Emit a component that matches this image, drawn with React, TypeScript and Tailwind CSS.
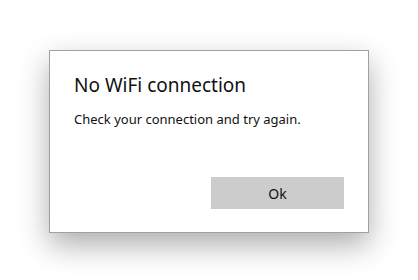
export default function App() {
  return (
    <div className="h-[280px] w-[418px] bg-white pl-[49px] pt-[50px]" style={{ fontFamily: '"Noto Sans", "Open Sans", sans-serif' }}>
      <div className="flex h-[183px] w-[320px] flex-col border border-[#a0a0a0] bg-white px-6 shadow-[0_12px_28px_rgba(0,0,0,0.32)]">
        <h1 className="mt-[21px] text-[19px] leading-[27px] text-[#111]">No WiFi connection</h1>
        <p className="mt-[11px] text-[13px] leading-[18px] text-[#111]">Check your connection and try again.</p>
        <div className="mt-auto mb-[23px] flex justify-end">
          <button className="h-[32px] w-[133px] bg-[#cccccc] text-[14px] text-[#111]">Ok</button>
        </div>
      </div>
    </div>
  )
}
